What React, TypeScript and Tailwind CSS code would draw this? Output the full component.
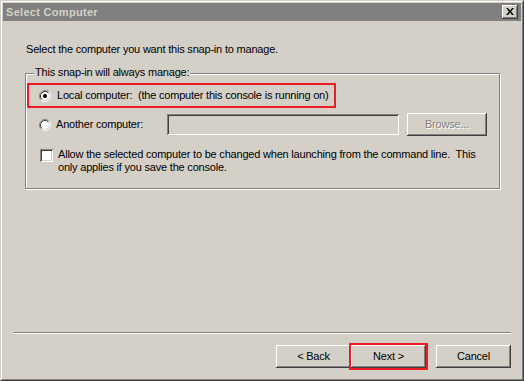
const face = "bg-[#d4d0c8]";

function Radio({ checked }: { checked?: boolean }) {
  return (
    <svg width="12" height="12" viewBox="0 0 12 12" className="shrink-0">
      <circle cx="6" cy="6" r="4.5" fill="#fff" />
      <path d="M2.11 9.89 A5.5 5.5 0 0 1 9.89 2.11" stroke="#808080" fill="none" />
      <path d="M9.89 2.11 A5.5 5.5 0 0 1 2.11 9.89" stroke="#fff" fill="none" />
      <path d="M2.82 9.18 A4.5 4.5 0 0 1 9.18 2.82" stroke="#404040" fill="none" />
      <path d="M9.18 2.82 A4.5 4.5 0 0 1 2.82 9.18" stroke="#d4d0c8" fill="none" />
      {checked && <circle cx="6" cy="6" r="2" fill="#000" />}
    </svg>
  );
}

function Button({ label, disabled, outlined }: { label: string; disabled?: boolean; outlined?: boolean }) {
  return (
    <div
      className={`w-[75px] h-[23px] flex items-center justify-center ${face} shadow-[inset_-1px_-1px_0_#404040,inset_1px_1px_0_#fff,inset_-2px_-2px_0_#808080] ${
        disabled ? "text-[#808080] [text-shadow:1px_1px_0_#fff]" : "text-black"
      } ${outlined ? "outline-2 outline-[#ed1c24]" : ""}`}
    >
      {label}
    </div>
  );
}

export default function App() {
  return (
    <div
      className="w-[524px] h-[381px] border border-t-[#d4d0c8] border-l-[#d4d0c8] border-r-[#404040] border-b-[#404040] text-[11px] leading-[13px] tracking-[-0.2px] text-black"
      style={{ fontFamily: '"Liberation Sans", Arial, sans-serif' }}
    >
      <div className={`h-full border border-t-white border-l-white border-r-[#808080] border-b-[#808080] p-[1px] ${face}`}>
        {/* title bar */}
        <div className="h-[18px] bg-[#808080] flex items-center justify-between">
          <span className="pl-[3px] font-bold tracking-[0.3px] text-[#d4d0c8]">Select Computer</span>
          <div className={`mr-[3px] w-[16px] h-[14px] flex items-center justify-center ${face} shadow-[inset_-1px_-1px_0_#404040,inset_1px_1px_0_#fff,inset_-2px_-2px_0_#808080]`}>
            <svg width="8" height="7" viewBox="0 0 8 7" className="-mt-[1px]">
              <path d="M0 0 L2 0 L4 2.5 L6 0 L8 0 L5 3.5 L8 7 L6 7 L4 4.5 L2 7 L0 7 L3 3.5 Z" fill="#000" />
            </svg>
          </div>
        </div>

        {/* body */}
        <div className="flex flex-col items-start">
          <p className="ml-[23px] mt-[22px]">Select the computer you want this snap-in to manage.</p>

          <div className="relative ml-[22px] mt-[17px] w-[475px] h-[116px] border border-[#808080] shadow-[1px_1px_0_#fff,inset_1px_1px_0_#fff]">
            <span className={`absolute left-[8px] -top-[8px] px-[1px] ${face}`}>This snap-in will always manage:</span>

            <div className="ml-[1px] mt-[9px] w-[309px] h-[25px] border-2 border-[#ed1c24] flex items-center pl-[10px]">
              <Radio checked />
              <span className="ml-[6px] whitespace-pre">Local computer:  (the computer this console is running on)</span>
            </div>

            <div className="ml-[13px] mt-[5px] h-[23px] flex items-center">
              <Radio />
              <span className="ml-[5px] w-[111px]">Another computer:</span>
              <div className={`w-[232px] h-[21px] ${face} shadow-[inset_1px_1px_0_#808080,inset_-1px_-1px_0_#fff,inset_2px_2px_0_#404040,inset_-2px_-2px_0_#d4d0c8]`} />
              <div className="ml-[8px]">
                <div className={`w-[80px] h-[23px] flex items-center justify-center ${face} shadow-[inset_-1px_-1px_0_#404040,inset_1px_1px_0_#fff,inset_-2px_-2px_0_#808080] text-[#808080] [text-shadow:1px_1px_0_#fff]`}>
                  Browse...
                </div>
              </div>
            </div>

            <div className="ml-[14px] mt-[13px] flex items-start">
              <div className="w-[13px] h-[13px] shrink-0 bg-white shadow-[inset_1px_1px_0_#808080,inset_-1px_-1px_0_#fff,inset_2px_2px_0_#404040,inset_-2px_-2px_0_#d4d0c8]" />
              <p className="ml-[5px] -mt-[1px] whitespace-pre">
                Allow the selected computer to be changed when launching from the command line.  This
                <br />
                only applies if you save the console.
              </p>
            </div>
          </div>

          <div className="ml-[11px] mt-[143px] w-[497px] border-t border-t-[#808080] border-b border-b-white" />

          <div className="ml-[273px] mt-[11px] flex">
            <Button label="< Back" />
            <Button label="Next >" outlined />
            <div className="ml-[10px]">
              <Button label="Cancel" />
            </div>
          </div>
        </div>
      </div>
    </div>
  );
}
